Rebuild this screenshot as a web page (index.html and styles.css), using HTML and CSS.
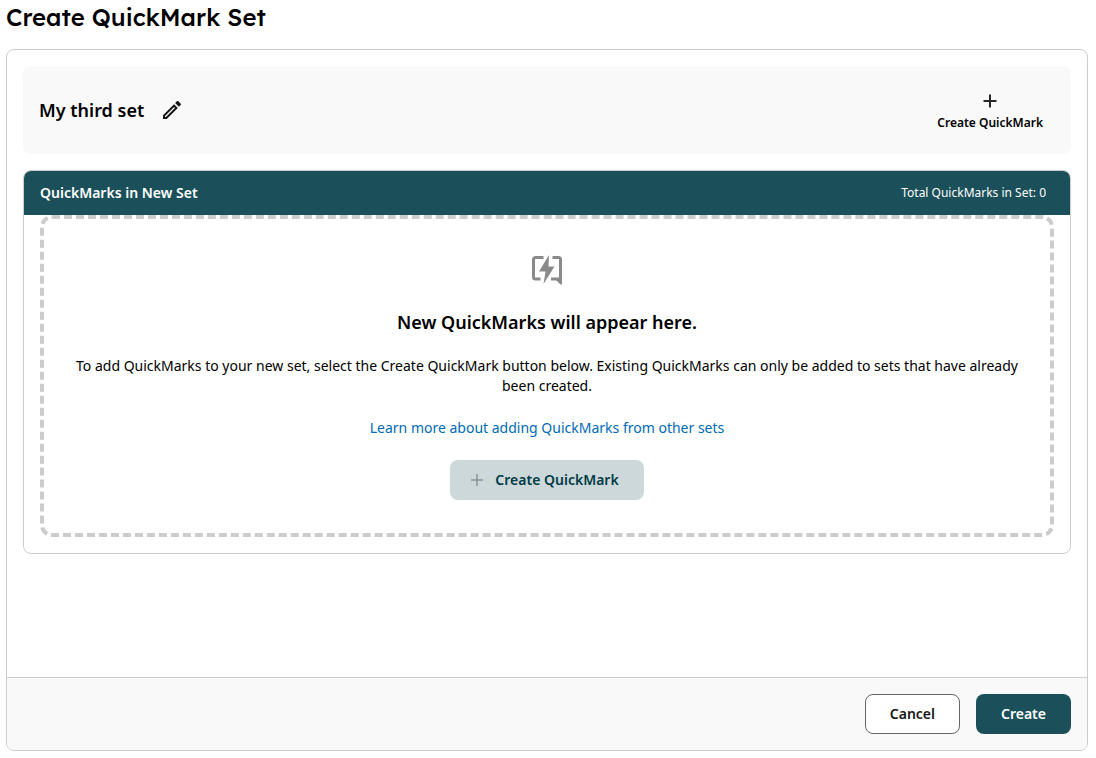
FILE: index.html
```html
<!DOCTYPE html>
<html lang="en">
<head>
  <meta charset="UTF-8">
  <meta name="viewport" content="width=device-width, initial-scale=1.0">
  <title>Create QuickMark Set</title>
  <link rel="stylesheet" href="styles.css">
</head>
<body>
  <h1 class="page-title">Create QuickMark Set</h1>
  <main class="panel">
    <div class="panel-body">
      <div class="set-header">
        <h2 class="set-name">My third set</h2>
        <button type="button" class="icon-button" aria-label="Edit set name">
          <svg width="24" height="24" viewBox="0 0 24 24" fill="#161616">
            <path d="M14.060 9.020l.92.92L5.920 19H5v-.92l9.060-9.060M17.660 3c-.25 0-.51.1-.7.290l-1.830 1.830 3.750 3.750 1.830-1.830c.39-.39.39-1.020 0-1.410l-2.340-2.340c-.2-.2-.45-.290-.71-.290zm-3.600 3.190L3 17.250V21h3.750L17.810 9.940l-3.750-3.750z"/>
          </svg>
        </button>
        <button type="button" class="create-action">
          <svg width="24" height="24" viewBox="0 0 24 24" fill="none" stroke="#262626" stroke-width="2">
            <path d="M12 5.500v13M5.500 12h13"/>
          </svg>
          Create QuickMark
        </button>
      </div>

      <section class="quickmarks">
        <div class="quickmarks-header">
          <h3>QuickMarks in New Set</h3>
          <span class="total">Total QuickMarks in Set: 0</span>
        </div>
        <div class="empty-state">
          <svg width="32" height="32" viewBox="0 0 32 32" fill="none" stroke="#8a8a8a" stroke-width="3">
            <path d="M12.500 3.500H4.500a2 2 0 0 0-2 2v17.500a2 2 0 0 0 2 2H9.500"/>
            <path d="M21.500 3.500h6a2 2 0 0 1 2 2V25M29.500 25H20"/>
            <path fill="#8a8a8a" stroke="none" d="M18 1L8 17.500h6.500l-2 12.500L23.500 12.500H17.500z"/>
            <path fill="#8a8a8a" stroke="none" d="M24 25h7v5.500h-1.500z"/>
          </svg>
          <h2>New QuickMarks will appear here.</h2>
          <p>To add QuickMarks to your new set, select the Create QuickMark button below. Existing QuickMarks can only be added to sets that have already been created.</p>
          <a href="#">Learn more about adding QuickMarks from other sets</a>
          <button type="button" class="btn btn-light">
            <svg width="12" height="12" viewBox="0 0 12 12" fill="none" stroke="#8a9294" stroke-width="1.500">
              <path d="M6 0v12M0 6h12"/>
            </svg>
            Create QuickMark
          </button>
        </div>
      </section>
    </div>

    <footer class="panel-footer">
      <button type="button" class="btn btn-outline">Cancel</button>
      <button type="submit" class="btn btn-primary">Create</button>
    </footer>
  </main>
</body>
</html>
```

FILE: styles.css
```css
* {
  box-sizing: border-box;
}

body {
  font-family: "Noto Sans", sans-serif;
  font-size: 14px;
  line-height: 20px;
  color: #000;
  background-color: #fff;
  margin: 0;
  padding: 2px 8px 7px 6px;
  min-height: 100vh;
  display: flex;
  flex-direction: column;
}

h1, h2, h3, p {
  margin: 0;
}

button {
  font-family: inherit;
  cursor: pointer;
}

svg {
  flex-shrink: 0;
}

.page-title {
  font-family: Lexend, Inter, sans-serif;
  font-size: 24px;
  line-height: 31px;
  font-weight: 500;
  margin-bottom: 16px;
}

.panel {
  flex: 1;
  display: flex;
  flex-direction: column;
  border: 1px solid #ccc;
  border-radius: 8px;
  overflow: hidden;
}

.panel-body {
  flex: 1;
  display: flex;
  flex-direction: column;
  gap: 16px;
  padding: 16px;
}

.set-header {
  display: flex;
  align-items: center;
  gap: 16px;
  min-height: 88px;
  padding: 16px;
  background-color: #f9f9f9;
  border-radius: 8px;
}

.set-name {
  font-size: 18px;
  line-height: 24px;
  font-weight: 600;
}

.icon-button {
  display: flex;
  padding: 0;
  border: none;
  background: none;
}

.create-action {
  display: flex;
  flex-direction: column;
  align-items: center;
  margin-left: auto;
  padding: 2px 12px 0;
  border: none;
  background: none;
  color: #000;
  font-size: 12px;
  line-height: 20px;
  font-weight: 600;
}

.quickmarks {
  border: 1px solid #ccc;
  border-radius: 8px;
  overflow: hidden;
}

.quickmarks-header {
  display: flex;
  align-items: center;
  justify-content: space-between;
  padding: 12px 24px 12px 16px;
  background-color: #1b505a;
  color: #fff;
}

.quickmarks-header h3 {
  font-size: 14px;
  font-weight: 600;
}

.total {
  font-size: 12px;
}

.empty-state {
  display: flex;
  flex-direction: column;
  align-items: center;
  margin: 0 16px 16px;
  padding: 35px 24px 33px;
  border: 4px dashed #ccc;
  border-radius: 12px;
  text-align: center;
}

.empty-state h2 {
  margin: 24px 0 22px;
  font-size: 18px;
  line-height: 24px;
  font-weight: 600;
}

.empty-state p,
.empty-state a {
  margin-bottom: 22px;
}

.empty-state a {
  color: #006bb6;
  text-decoration: none;
}

.empty-state a:hover {
  text-decoration: underline;
}

.btn {
  display: flex;
  align-items: center;
  justify-content: center;
  gap: 12px;
  height: 40px;
  padding: 0 24px 1px;
  border: 1px solid transparent;
  border-radius: 8px;
  font-size: 14px;
  font-weight: 600;
}

.btn-light {
  padding-left: 20px;
  background-color: #cdd8da;
  color: #003b45;
}

.btn-outline {
  background-color: #fff;
  border-color: #666;
  color: #161616;
}

.btn-primary {
  background-color: #1b505a;
  color: #fff;
}

.panel-footer {
  display: flex;
  justify-content: flex-end;
  gap: 16px;
  padding: 16px;
  background-color: #f9f9f9;
  border-top: 1px solid #ccc;
}
```
